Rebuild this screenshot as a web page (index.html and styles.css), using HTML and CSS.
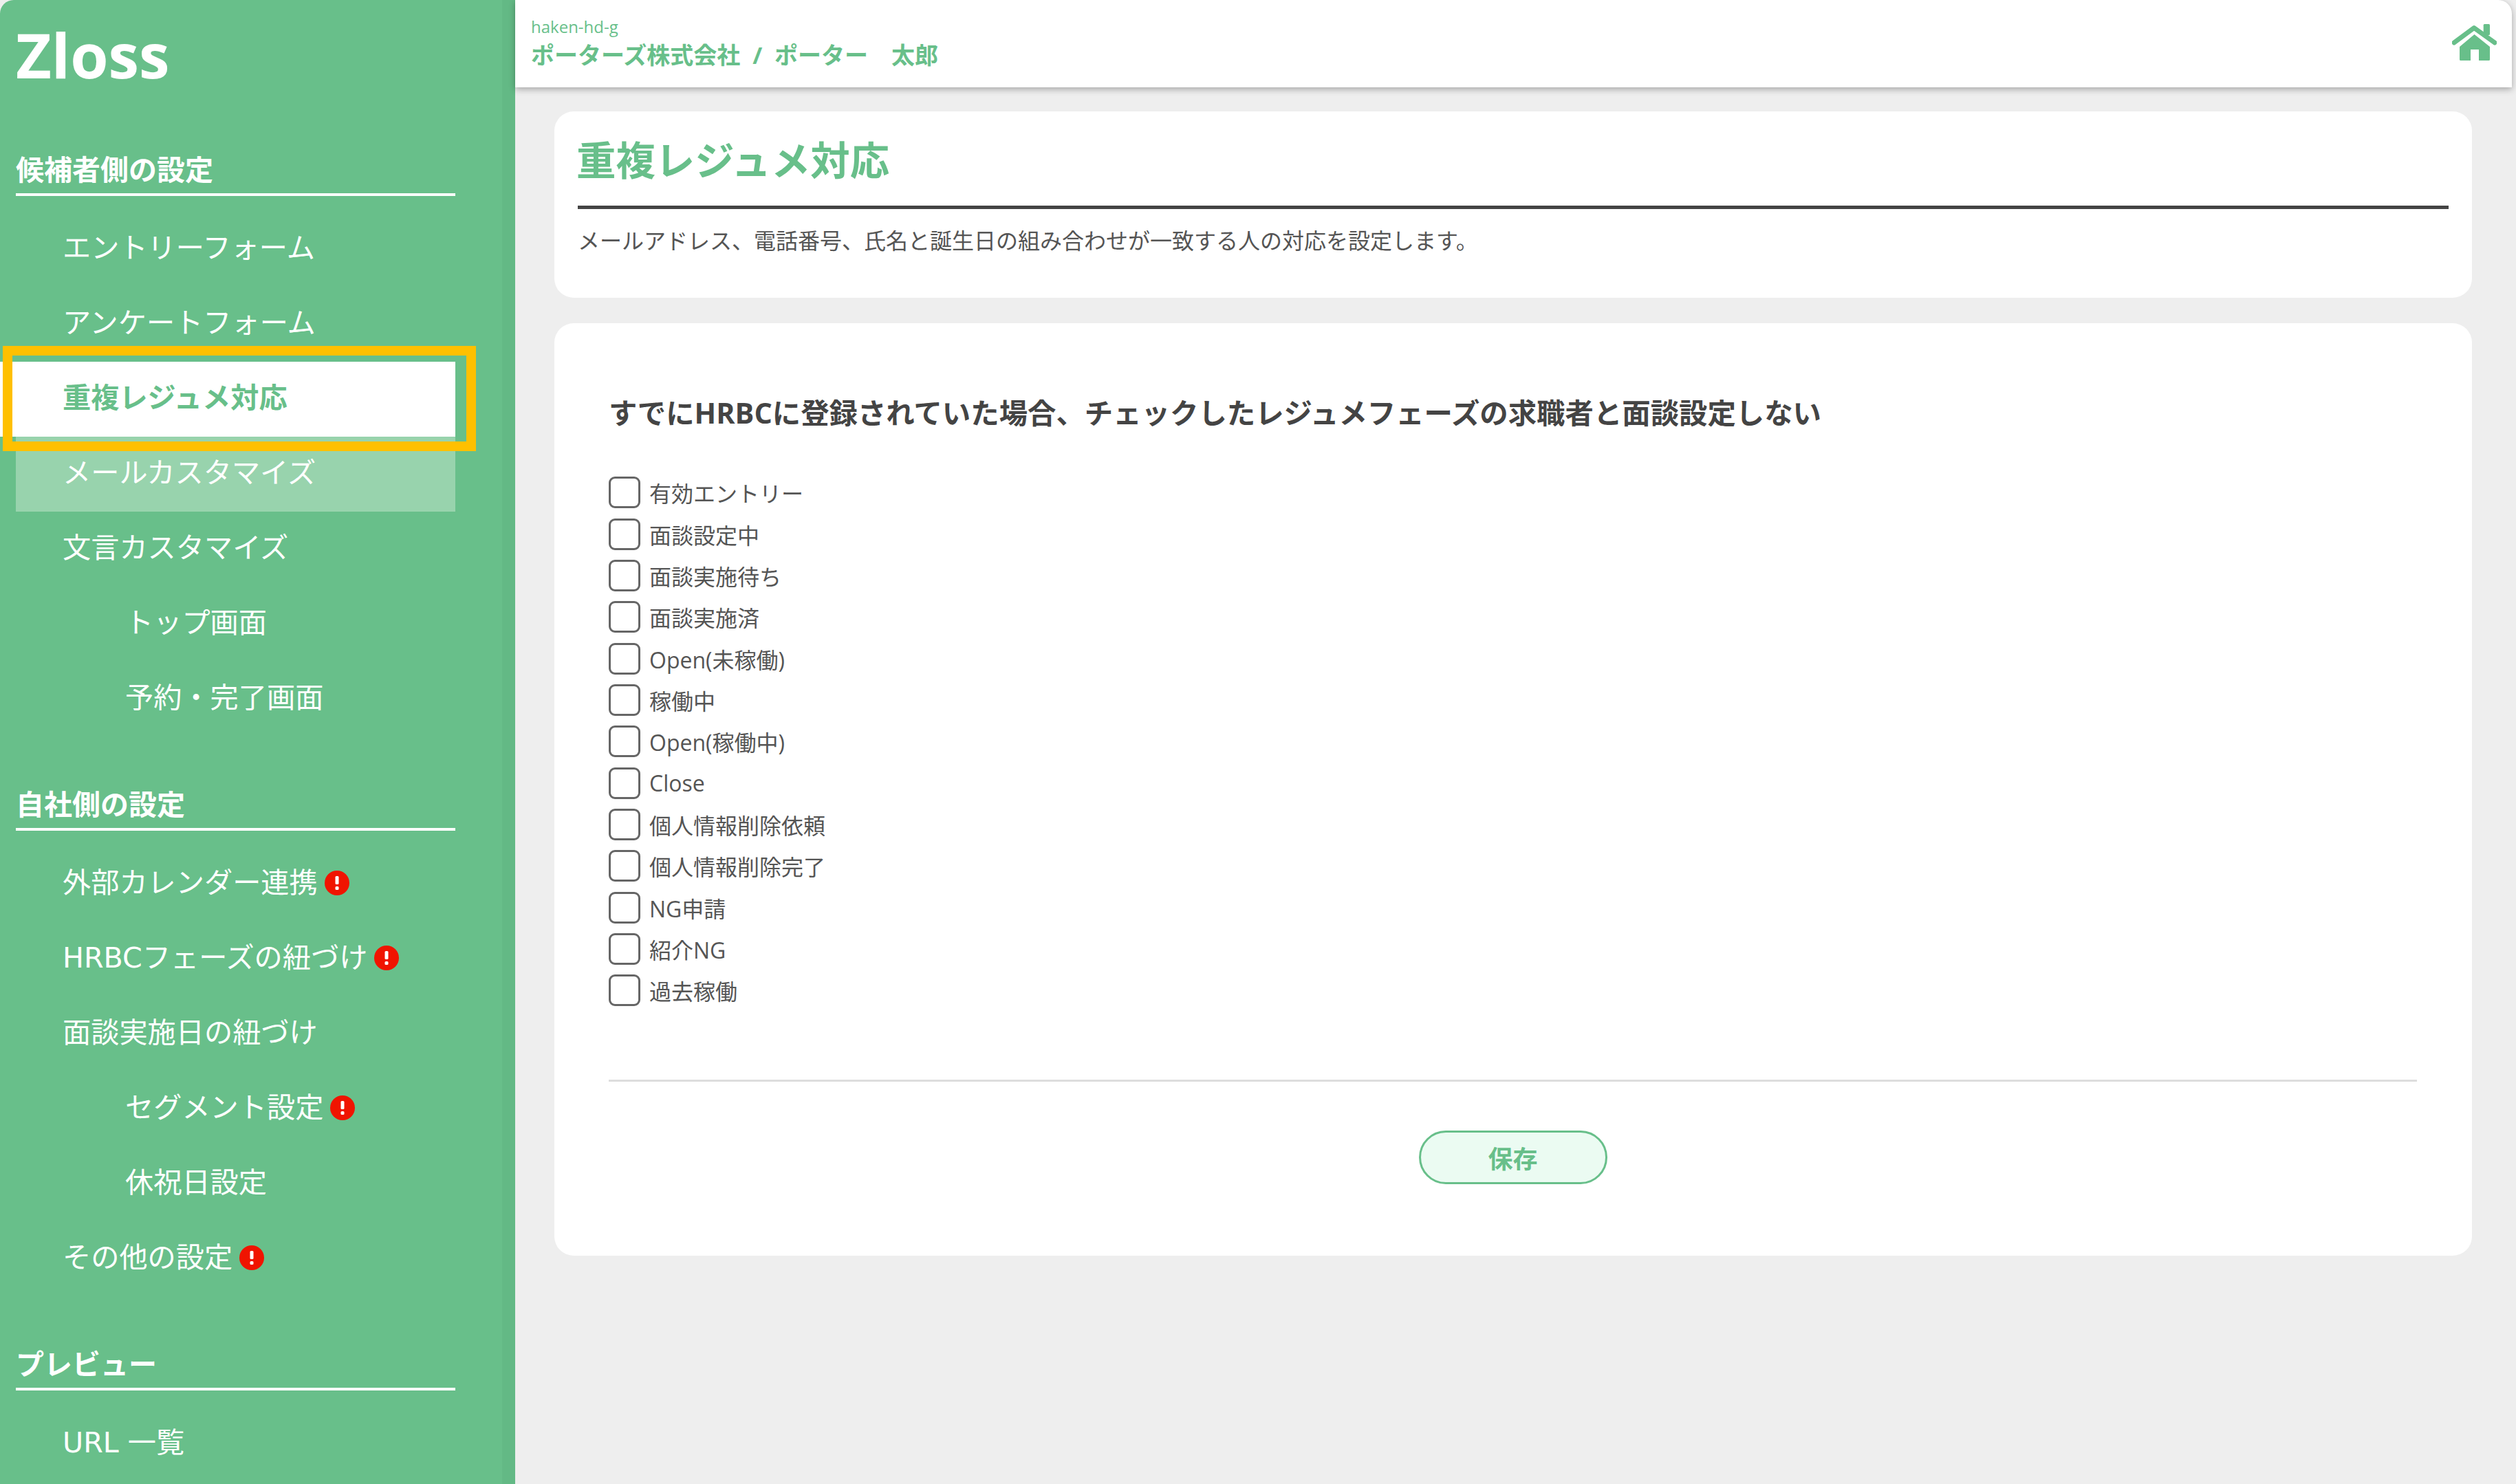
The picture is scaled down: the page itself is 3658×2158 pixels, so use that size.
FILE: index.html
```html
<!DOCTYPE html>
<html lang="ja">
<head>
<meta charset="utf-8">
<title>重複レジュメ対応</title>
<link rel="stylesheet" href="styles.css">
</head>
<body>
<div class="page">
  <aside class="sidebar">
    <div class="sidebar-inner">
      <div class="logo">Zloss</div>
      <section class="nav-section">
        <h2 class="nav-heading">候補者側の設定</h2>
        <ul class="nav-list">
          <li class="nav-item">エントリーフォーム</li>
          <li class="nav-item">アンケートフォーム</li>
          <li class="nav-item nav-active">重複レジュメ対応<span class="highlight-frame"></span></li>
          <li class="nav-item nav-hover">メールカスタマイズ</li>
          <li class="nav-item">文言カスタマイズ</li>
          <li class="nav-item nav-sub">トップ画面</li>
          <li class="nav-item nav-sub">予約・完了画面</li>
        </ul>
      </section>
      <section class="nav-section">
        <h2 class="nav-heading">自社側の設定</h2>
        <ul class="nav-list">
          <li class="nav-item">外部カレンダー連携<svg class="alert" viewBox="0 0 36 36"><circle cx="18" cy="18" r="18"/><rect x="15.5" y="8" width="5" height="12" rx="1.5"/><rect x="15.5" y="23" width="5" height="5" rx="1.5"/></svg></li>
          <li class="nav-item">HRBCフェーズの紐づけ<svg class="alert" viewBox="0 0 36 36"><circle cx="18" cy="18" r="18"/><rect x="15.5" y="8" width="5" height="12" rx="1.5"/><rect x="15.5" y="23" width="5" height="5" rx="1.5"/></svg></li>
          <li class="nav-item">面談実施日の紐づけ</li>
          <li class="nav-item nav-sub">セグメント設定<svg class="alert" viewBox="0 0 36 36"><circle cx="18" cy="18" r="18"/><rect x="15.5" y="8" width="5" height="12" rx="1.5"/><rect x="15.5" y="23" width="5" height="5" rx="1.5"/></svg></li>
          <li class="nav-item nav-sub">休祝日設定</li>
          <li class="nav-item">その他の設定<svg class="alert" viewBox="0 0 36 36"><circle cx="18" cy="18" r="18"/><rect x="15.5" y="8" width="5" height="12" rx="1.5"/><rect x="15.5" y="23" width="5" height="5" rx="1.5"/></svg></li>
        </ul>
      </section>
      <section class="nav-section">
        <h2 class="nav-heading">プレビュー</h2>
        <ul class="nav-list">
          <li class="nav-item">URL 一覧</li>
        </ul>
      </section>
    </div>
    <div class="sidebar-strip"></div>
  </aside>
  <div class="main">
    <header class="topbar">
      <div class="account">
        <div class="account-id">haken-hd-g</div>
        <div class="account-name">ポーターズ株式会社 / ポーター　太郎</div>
      </div>
      <svg class="home-icon" viewBox="0 0 65 53">
        <rect x="45.7" y="0" width="9.3" height="16" rx="1.5"/>
        <path class="home-roof" d="M3 27 L32 5.5 L62 27"/>
        <path d="M11 33 L32.5 15 L55 33 V51.5 Q55 53 53.5 53 H39 V37 H27 V53 H12.5 Q11 53 11 51.5 Z"/>
      </svg>
    </header>
    <div class="content">
      <section class="card card-title">
        <h1 class="page-title">重複レジュメ対応</h1>
        <p class="page-desc">メールアドレス、電話番号、氏名と誕生日の組み合わせが一致する人の対応を設定します。</p>
      </section>
      <section class="card card-form">
        <h3 class="form-heading">すでにHRBCに登録されていた場合、チェックしたレジュメフェーズの求職者と面談設定しない</h3>
        <ul class="check-list">
          <li class="check-row"><span class="check-box"></span>有効エントリー</li>
          <li class="check-row"><span class="check-box"></span>面談設定中</li>
          <li class="check-row"><span class="check-box"></span>面談実施待ち</li>
          <li class="check-row"><span class="check-box"></span>面談実施済</li>
          <li class="check-row"><span class="check-box"></span>Open(未稼働)</li>
          <li class="check-row"><span class="check-box"></span>稼働中</li>
          <li class="check-row"><span class="check-box"></span>Open(稼働中)</li>
          <li class="check-row"><span class="check-box"></span>Close</li>
          <li class="check-row"><span class="check-box"></span>個人情報削除依頼</li>
          <li class="check-row"><span class="check-box"></span>個人情報削除完了</li>
          <li class="check-row"><span class="check-box"></span>NG申請</li>
          <li class="check-row"><span class="check-box"></span>紹介NG</li>
          <li class="check-row"><span class="check-box"></span>過去稼働</li>
        </ul>
        <hr class="divider">
        <div class="actions"><button class="save-btn" type="button">保存</button></div>
      </section>
    </div>
  </div>
</div>
</body>
</html>
```
FILE: styles.css
```css
* { box-sizing: border-box; }
html, body { margin: 0; padding: 0; height: 100%; }
body {
  background: #eeeeee;
  font-family: "Open Sans", "Noto Sans CJK JP", sans-serif;
  color: #555;
  overflow: hidden;
}
ul { list-style: none; margin: 0; padding: 0; }
h1, h2, h3, p { margin: 0; }

.page { display: flex; width: 3658px; height: 2158px; overflow: hidden; }

.sidebar {
  width: 749px;
  flex: none;
  display: flex;
  background: #68bf8a;
  border-top-left-radius: 20px;
  color: #fff;
}
.sidebar-inner { width: 730px; flex: none; padding: 24px 68px 0 23px; }
.sidebar-strip { flex: 1; background: #63b985; }

.logo {
  height: 110px;
  line-height: 110px;
  font-size: 89.5px;
  font-weight: 700;
  margin-bottom: 82px;
}

.nav-section { margin-bottom: 68px; }
.nav-heading {
  height: 69px;
  line-height: 60px;
  font-size: 41px;
  font-weight: 700;
  border-bottom: 4px solid #fff;
}
.nav-list { margin-top: 23px; }
.nav-item {
  display: flex;
  align-items: center;
  height: 109px;
  padding-left: 68px;
  padding-bottom: 3px;
  font-family: "DejaVu Sans", "Noto Sans CJK JP", sans-serif;
  font-size: 41.2px;
  line-height: 60px;
  white-space: nowrap;
}
.nav-sub { padding-left: 159px; }
.nav-active {
  position: relative;
  margin-left: -23px;
  padding-left: 91px;
  background: #fff;
  color: #68bf8a;
  font-weight: 700;
}
.nav-hover { background: #98d3ad; }
.highlight-frame {
  position: absolute;
  left: 4px;
  top: -23px;
  width: 688px;
  height: 153px;
  border: 14px solid #ffc000;
}
.alert { width: 36px; height: 36px; margin-left: 10px; flex: none; fill: #f01400; }
.alert rect { fill: #fff; }

.main { flex: 1; min-width: 0; }
.topbar {
  height: 127px;
  margin-right: 6px;
  padding: 24px 22px 0 23px;
  background: #fff;
  border-top-right-radius: 20px;
  box-shadow: 0 3px 10px rgba(0, 0, 0, .3);
  display: flex;
  justify-content: space-between;
  align-items: flex-start;
  color: #68bf8a;
}
.account-id { font-size: 24px; line-height: 30px; font-weight: 400; }
.account-name { font-size: 34px; line-height: 46px; font-weight: 700; margin-top: 3px; word-spacing: 9px; }
.home-icon { width: 65px; height: 53px; margin-top: 11px; fill: #68bf8a; flex: none; }
.home-roof { fill: none; stroke: #68bf8a; stroke-width: 7; stroke-linecap: round; stroke-linejoin: round; }

.content { padding: 35px 64px 0 57px; }
.card { background: #fff; border-radius: 28px; }
.card-title { height: 271px; padding: 32px 34px 0 34px; }
.page-title {
  height: 110px;
  line-height: 78px;
  font-size: 57.4px;
  font-weight: 700;
  color: #68bf8a;
  border-bottom: 5px solid #444;
  text-indent: -2px;
}
.page-desc { margin-top: 24px; font-size: 32px; line-height: 44px; color: #555; }

.card-form { margin-top: 37px; height: 1356px; padding: 98px 80px 0 79px; }
.form-heading { font-size: 41.4px; line-height: 64px; font-weight: 700; color: #444; }
.check-list { margin-top: 54px; }
.check-row {
  display: flex;
  align-items: center;
  height: 60.35px;
  font-size: 32px;
  color: #555;
}
.check-box {
  width: 46px;
  height: 46px;
  margin-right: 13px;
  flex: none;
  border: 3px solid #666;
  border-radius: 9px;
  background: #fff;
}
.divider { margin: 100px 0 0; border: 0; border-top: 3px solid #ddd; }
.actions { display: flex; justify-content: center; margin-top: 71px; }
.save-btn {
  width: 274px;
  height: 78px;
  border: 3px solid #68bf8a;
  border-radius: 39px;
  background: #ebfbf2;
  color: #68bf8a;
  font-family: inherit;
  font-size: 36px;
  font-weight: 700;
  padding: 0;
}
```
